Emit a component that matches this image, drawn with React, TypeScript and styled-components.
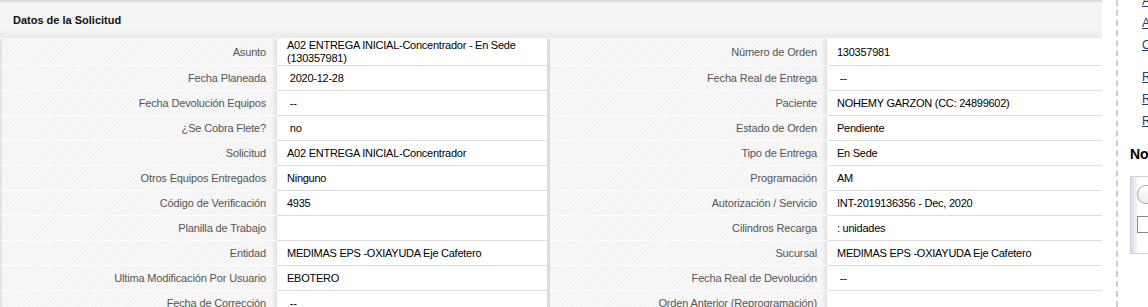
import React from "react";
import styled, { createGlobalStyle } from "styled-components";

const GlobalStyle = createGlobalStyle`
  html, body {
    margin: 0;
    padding: 0;
    background: #fff;
    overflow: hidden;
  }
  body {
    font-family: "Liberation Sans", Arial, sans-serif;
    font-size: 11px;
    color: #000;
  }
`;

const Page = styled.div`
  display: flex;
  width: 1148px;
  height: 307px;
  overflow: hidden;
`;

const Panel = styled.div`
  width: 1102px;
  flex: none;
  border-top: 2px solid #dcdcdc;
`;

const PanelHeader = styled.div`
  height: 36px;
  display: flex;
  align-items: center;
  padding-left: 13px;
  font-weight: bold;
  font-size: 11px;
  color: #111;
  background: linear-gradient(
    to bottom,
    #f5f5f5 0%,
    #f4f4f4 78%,
    #e9e9e6 100%
  );
  border-bottom: 1px solid #fbfbfb;
`;

const Table = styled.div`
  display: flex;
  flex-direction: column;
`;

const Row = styled.div<{ $tall?: boolean }>`
  display: grid;
  grid-template-columns: 277px 273px 277px 275px;
  height: ${(p) => (p.$tall ? 27 : 25)}px;
`;

const LabelCell = styled.div<{ $first?: boolean }>`
  display: flex;
  align-items: center;
  justify-content: flex-end;
  padding-right: ${(p) => (p.$first ? 11 : 10)}px;
  color: #555;
  letter-spacing: -0.15px;
  border-bottom: 1px solid #fdfdfd;
  border-left: ${(p) => (p.$first ? "2px solid #e2e2e2" : "none")};
  background: repeating-linear-gradient(
      135deg,
      #f7f7f7 0px,
      #f7f7f7 2px,
      #f3f3f3 2px,
      #f3f3f3 3px
    );
  box-shadow: inset -6px 0 5px -4px rgba(0, 0, 0, 0.1);
  white-space: nowrap;
`;

const ValueCell = styled.div<{ $divider?: boolean }>`
  display: flex;
  align-items: center;
  padding-left: 10px;
  background: #fff;
  letter-spacing: -0.25px;
  border-bottom: 1px solid #dedede;
  border-right: ${(p) => (p.$divider ? "3px solid #dcdcdc" : "none")};
  line-height: 13px;
  white-space: pre-wrap;
`;

const Sidebar = styled.div`
  flex: none;
  margin-left: 14px;
  width: 200px;
  border-left: 2px dashed #cdcdcd;
  padding-left: 12px;
  overflow: hidden;
`;

const LinkList = styled.ul`
  list-style: none;
  margin: -10px 0 0 0;
  padding: 0 0 0 12px;
`;

const LinkItem = styled.li<{ $gapBefore?: boolean }>`
  height: 22px;
  line-height: 22px;
  margin-top: ${(p) => (p.$gapBefore ? 10 : 0)}px;
  a {
    color: #263d6c;
    text-decoration: underline;
    font-size: 12px;
    white-space: nowrap;
  }
`;

const SideTitle = styled.h3`
  margin: 14px 0 0 0;
  font-size: 14px;
  font-weight: bold;
  white-space: nowrap;
`;

const NoteBox = styled.div`
  margin-top: 14px;
  border: 1px solid #d0d0d0;
  height: 68px;
  padding: 8px 0 0 6px;
  background: linear-gradient(to right, #d9d9f0 0px, #fff 8px);
`;

const Pill = styled.div`
  width: 120px;
  height: 17px;
  border: 1px solid #a9a9a9;
  border-radius: 9px;
  background: linear-gradient(to bottom, #fff, #ececec);
`;

const Check = styled.div`
  margin-top: 12px;
  width: 15px;
  height: 15px;
  border: 1px solid #8a8a8a;
  background: #fff;
`;

type Item = { label: string; value: string };

const rows: [Item, Item][] = [
  [
    { label: "Asunto", value: "A02 ENTREGA INICIAL-Concentrador - En Sede\n(130357981)" },
    { label: "Número de Orden", value: "130357981" },
  ],
  [
    { label: "Fecha Planeada", value: " 2020-12-28" },
    { label: "Fecha Real de Entrega", value: " --" },
  ],
  [
    { label: "Fecha Devolución Equipos", value: " --" },
    { label: "Paciente", value: "NOHEMY GARZON (CC: 24899602)" },
  ],
  [
    { label: "¿Se Cobra Flete?", value: " no" },
    { label: "Estado de Orden", value: "Pendiente" },
  ],
  [
    { label: "Solicitud", value: "A02 ENTREGA INICIAL-Concentrador" },
    { label: "Tipo de Entrega", value: "En Sede" },
  ],
  [
    { label: "Otros Equipos Entregados", value: "Ninguno" },
    { label: "Programación", value: "AM" },
  ],
  [
    { label: "Código de Verificación", value: "4935" },
    { label: "Autorización / Servicio", value: "INT-2019136356 - Dec, 2020" },
  ],
  [
    { label: "Planilla de Trabajo", value: "" },
    { label: "Cilindros Recarga", value: ": unidades" },
  ],
  [
    { label: "Entidad", value: "MEDIMAS EPS -OXIAYUDA Eje Cafetero" },
    { label: "Sucursal", value: "MEDIMAS EPS -OXIAYUDA Eje Cafetero" },
  ],
  [
    { label: "Ultima Modificación Por Usuario", value: "EBOTERO" },
    { label: "Fecha Real de Devolución", value: " --" },
  ],
  [
    { label: "Fecha de Corrección", value: " --" },
    { label: "Orden Anterior (Reprogramación)", value: "" },
  ],
];

const links = [
  { text: "Agregar Adjunto", gap: false },
  { text: "Anular Orden", gap: false },
  { text: "Otros Servicios", gap: false },
  { text: "Reprogramar Orden", gap: true },
  { text: "Registrar Devolución", gap: false },
  { text: "Reportar Novedad", gap: false },
];

export default function App() {
  return (
    <>
      <GlobalStyle />
      <Page>
        <Panel>
          <PanelHeader>Datos de la Solicitud</PanelHeader>
          <Table>
            {rows.map(([left, right], i) => (
              <Row key={left.label} $tall={i === 0}>
                <LabelCell $first>{left.label}</LabelCell>
                <ValueCell $divider>{left.value}</ValueCell>
                <LabelCell>{right.label}</LabelCell>
                <ValueCell>{right.value}</ValueCell>
              </Row>
            ))}
          </Table>
        </Panel>
        <Sidebar>
          <LinkList>
            {links.map((l) => (
              <LinkItem key={l.text} $gapBefore={l.gap}>
                <a href="#">{l.text}</a>
              </LinkItem>
            ))}
          </LinkList>
          <SideTitle>Notas</SideTitle>
          <NoteBox>
            <Pill />
            <Check />
          </NoteBox>
        </Sidebar>
      </Page>
    </>
  );
}
